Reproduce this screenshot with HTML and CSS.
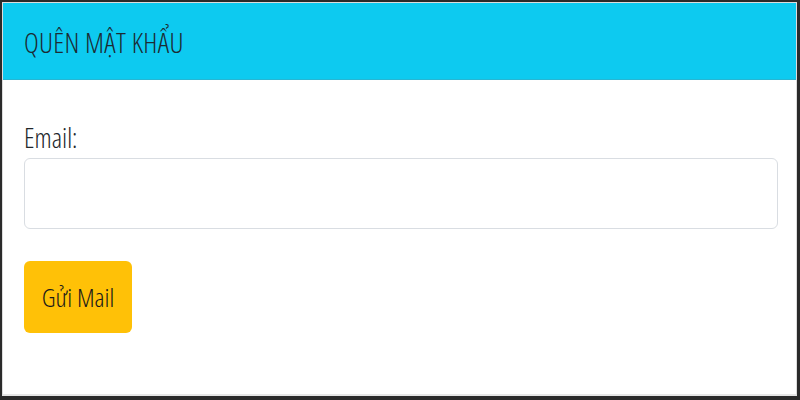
FILE: index.html
```html
<!DOCTYPE html>
<html lang="vi">
<head>
<meta charset="utf-8">
<link rel="stylesheet" href="styles.css">
<title>Quên mật khẩu</title>
</head>
<body>
<div class="frame">
  <div class="card">
    <div class="card-header">QUÊN MẬT KHẨU</div>
    <div class="card-body">
      <label class="label" for="email">Email:</label>
      <input class="input" id="email" type="email">
      <button class="btn" type="button">Gửi Mail</button>
    </div>
  </div>
</div>
</body>
</html>
```

FILE: styles.css
```css
html, body {
  margin: 0;
  padding: 0;
  height: 100%;
}
body {
  background: #2a2a2a;
  font-family: "Open Sans", "Liberation Sans", sans-serif;
  font-stretch: 75%;
  font-weight: 350;
  color: #212529;
}
.frame {
  height: 100%;
  box-sizing: border-box;
  padding: 2px 3px 4px 2px;
  display: flex;
}
.card {
  flex: 1;
  display: flex;
  flex-direction: column;
  background: #fff;
  border: 1px solid #dcdcdc;
  border-bottom: 2px solid #e6e6e6;
}
.card-header {
  height: 77px;
  box-sizing: border-box;
  background: #0dcaf0;
  border-bottom: 1px solid #27b6d3;
  padding: 2px 0 0 21px;
  display: flex;
  align-items: center;
  font-size: 28px;
  font-stretch: 79%;
  letter-spacing: 0.3px;
  color: #1c2b33;
}
.card-body {
  display: flex;
  flex-direction: column;
  align-items: flex-start;
  padding: 38px 18px 0 21px;
}
.label {
  font-size: 27px;
  line-height: 40px;
  color: #212529;
}
.input {
  align-self: stretch;
  height: 71px;
  box-sizing: border-box;
  border: 1px solid #d9dde2;
  border-radius: 6px;
  background: #fff;
  font: inherit;
  font-size: 27px;
}
.btn {
  margin-top: 32px;
  width: 108px;
  height: 72px;
  border: none;
  border-radius: 6px;
  background: #ffc107;
  color: #1a1a1a;
  font-family: inherit;
  font-stretch: 75%;
  font-weight: 350;
  font-size: 26px;
  padding: 0;
}
```
